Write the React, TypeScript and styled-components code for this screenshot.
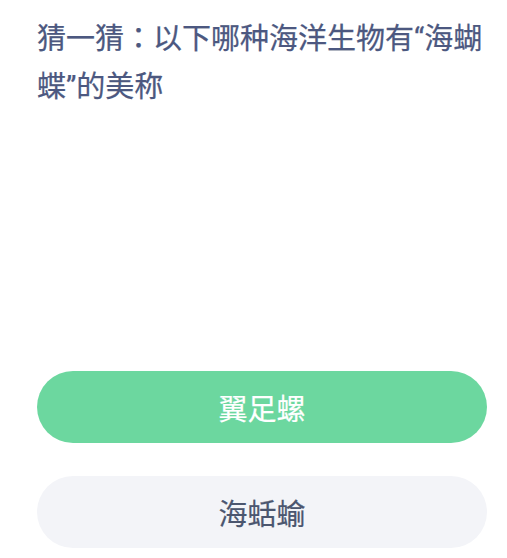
import React from 'react'
import styled, { createGlobalStyle } from 'styled-components'

const GlobalStyle = createGlobalStyle`
    html, body {
        margin: 0;
        padding: 0;
        background: #ffffff;
    }
    body {
        font-family: Roboto, "Noto Sans CJK SC", sans-serif;
    }
`

// Antwortmöglichkeiten: die richtige ist grün hinterlegt
const options = [
    { label: '翼足螺', correct: true },
    { label: '海蛞蝓', correct: false },
]

const App: React.FC = () => {
    return (
        <>
            <GlobalStyle />
            <Page>
                <Question>
                    猜一猜<Colon>：</Colon>以下哪种海洋生物有“海蝴蝶”的美称
                </Question>
                <Options>
                    {options.map((item) => (
                        <Option key={item.label} correct={item.correct}>
                            {item.label}
                        </Option>
                    ))}
                </Options>
            </Page>
        </>
    )
}

export default App

const Page = styled.div`
    width: 507px;
    height: 558px;
    box-sizing: border-box;
    padding: 12px 20px 0 37px;
    display: flex;
    flex-direction: column;
    overflow: hidden;
`

const Question = styled.div`
    font-size: 29px;
    font-weight: 400;
    line-height: 48px;
    color: #4c5880;
    width: 452px;
    height: 96px;
    -webkit-text-stroke: 0.25px #4c5880;
`

// zentrierter Doppelpunkt wie im Original
const Colon = styled.span`
    font-family: "Noto Sans CJK TC", sans-serif;
`

const Options = styled.div`
    margin-top: 263px;
    display: flex;
    flex-direction: column;
    gap: 33px;
`

const Option = styled.div<{ correct: boolean }>`
    height: 72px;
    border-radius: 36px;
    display: flex;
    align-items: center;
    justify-content: center;
    font-size: 29px;
    font-weight: 400;
    background: ${(p) => (p.correct ? '#6cd79f' : '#f3f4f8')};
    color: ${(p) => (p.correct ? '#ffffff' : '#4b566f')};
    -webkit-text-stroke: 0.2px ${(p) => (p.correct ? '#ffffff' : '#4b566f')};
`
